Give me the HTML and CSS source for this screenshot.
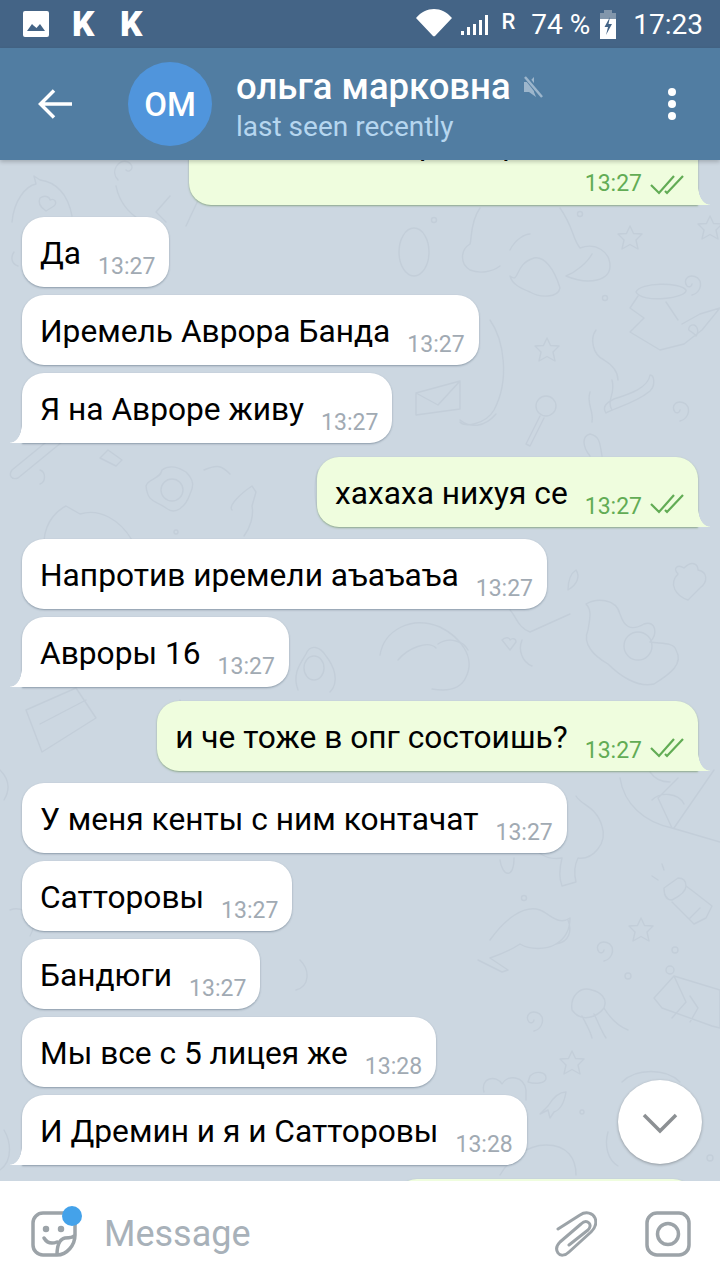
FILE: index.html
```html
<!DOCTYPE html>
<html lang="ru">
<head>
  <meta charset="UTF-8" />
  <meta name="viewport" content="width=device-width, initial-scale=1.0"/>
  <title>Telegram chat</title>
  <link rel="stylesheet" href="styles.css">
</head>
<body>

  <div class="status-bar">
    <div class="status-left">
      <svg class="ic-picture" width="26" height="26" viewBox="0 0 26 26">
        <path fill="#fff" fill-rule="evenodd" d="M2 0h22a2 2 0 0 1 2 2v22a2 2 0 0 1-2 2H2a2 2 0 0 1-2-2V2a2 2 0 0 1 2-2zM4 20h18l-5-7-3.500 4-3-2.500L9 13z"/>
      </svg>
      <span class="status-k">K</span>
      <span class="status-k">K</span>
    </div>
    <div class="status-right">
      <svg class="ic-wifi" width="36" height="28" viewBox="0 0 36 28">
        <path fill="#fff" d="M0 9C10-3 26-3 36 9L19.500 26.500a2 2 0 0 1-3 0z"/>
      </svg>
      <svg class="ic-signal" width="28" height="20" viewBox="0 0 28 20" fill="#fff">
        <rect x="0" y="16" width="3" height="4"/>
        <rect x="6" y="12" width="3" height="8"/>
        <rect x="12" y="9" width="3" height="11"/>
        <rect x="18" y="5" width="3" height="15"/>
        <rect x="24" y="0" width="3" height="20"/>
      </svg>
      <span class="status-r">R</span>
      <span class="status-text">74 %</span>
      <svg class="ic-battery" width="16" height="29" viewBox="0 0 16 29">
        <path fill="#8296ab" d="M4 0h8v3h4v9H0V3h4z"/>
        <path fill="#fff" d="M0 12h16v17H0z"/>
        <path fill="#fff" d="M0 9h16v4H0z"/>
        <path fill="#446486" d="M10 7 4.500 17H8l-2 8 6-11H8.500z"/>
      </svg>
      <span class="status-text status-time">17:23</span>
    </div>
  </div>

  <header class="chat-header">
    <svg class="ic-back" width="34" height="30" viewBox="0 0 34 30">
      <path fill="none" stroke="#fff" stroke-width="3.500" d="M34 15H3M16 1.500 2.500 15 16 28.500"/>
    </svg>
    <div class="avatar">OM</div>
    <div class="chat-title">
      <div class="chat-name">
        <span>ольга марковна</span>
        <svg width="20" height="22" viewBox="0 0 20 22">
          <path fill="#9db6cc" d="M1 6h5l5-5v15l2 5-7-5H1z"/>
          <path stroke="#517da2" stroke-width="5" d="M3 1l15 19"/>
          <path stroke="#9db6cc" stroke-width="2.500" d="M2 1l17 20"/>
        </svg>
      </div>
      <div class="chat-status">last seen recently</div>
    </div>
    <div class="menu-dots"><i></i><i></i><i></i></div>
  </header>

  <main class="chat">
    <svg class="wallpaper" width="720" height="1021" viewBox="0 160 720 1021" fill="none" stroke="#c3ced9" stroke-width="1.400" stroke-linecap="round" stroke-linejoin="round">
      <defs>
        <path id="star" d="M0-12 3.500-4.500 12-4 6 2 8 11 0 6.500-8 11-6 2-12-4-3.500-4.500z"/>
        <path id="spiral" d="M2 0a3 3 0 0 1-5 2 6 6 0 0 1 1-9 9 9 0 0 1 12 4 11 11 0 0 1-8 14"/>
      </defs>
      <!-- top left -->
      <path d="M12 222c2-22 14-36 24-38l-2-8 6 4c16 2 28 14 32 36M40 198c6-4 10 0 10 2 4-2 8 2 4 6l-8 5c-6-4-8-9-6-13z"/>
      <path d="M118 180c-8-8 0-22 10-18 8 4 2 12-2 8M116 186c4 20 18 32 32 38M170 196l-14 16 10 10"/>
      <path d="M186 226l14-30M14 252c-4 6-2 12 4 14"/>
      <!-- upper right figure -->
      <ellipse cx="414" cy="252" rx="15" ry="24"/>
      <path d="M480 208c-10 14-8 30-10 36-10 6-10 20 0 26 10 4 22 2 30-4M560 208c14 20 12 30 20 40 16-6 30 4 30 18 0 14-20 20-44 10 10-4 22-14 26-22M510 250c6-12 16-16 20-16M510 276c10 8 4-12 24-18 10-2 20 10 26 30-2 10-20 10-30 4-10-4-18-8-20-16z"/>
      <use href="#star" x="630" y="238"/>
      <use href="#star" x="710" y="228"/>
      <path d="M636 292c4-10 44-10 50-2 2 8-44 14-50 2zM638 296l-8 12 14 10-14 14 30 18 24-6 18-14 18-22-20 6-18 10M666 302l12 18M690 326c6-4 10 4 6 10-4-6-10-4-6-10z"/>
      <use href="#spiral" x="690" y="284"/>
      <path d="M596 330c-6 8-4 24 8 30 10 6 14 12 14 20M650 375c-2 14-24 20-36 24-8 4-12 8-8 14 6-4 30-10 44-22 6-6 4-16 0-16z"/>
      <use href="#star" x="547" y="350"/>
      <circle cx="605" cy="298" r="2.500"/><circle cx="434" cy="220" r="2.500"/><circle cx="580" cy="214" r="2.500"/>
      <!-- envelope, lollipop -->
      <path d="M416 393l44-12v28l-44 6zM416 393l22 12 22-24M490 320c14 20 20 60 4 90-8 14-30 18-34 12M460 420c10 8 24 8 36-6"/>
      <circle cx="546" cy="406" r="10"/>
      <path d="M540 416l-14 28 4 2 14-28"/>
      <use href="#spiral" x="678" y="410"/>
      <path d="M590 392c-4 12 4 18 2 30M612 380c4 14-6 20 0 30"/>
      <path d="M590 456c-8-10-8-20 0-22 10 2 10 10 12 22"/>
      <!-- left middle -->
      <path d="M12 470l44-36 6 8-44 36c-6 2-10-2-6-8zM108 450l14 10-6 6-16-8z"/>
      <path d="M146 486c2-8 14-6 16-16 8-6 18-2 24 2 8 8 8 14 4 22-4 12-14 22-24 14-10-8-18-4-20-22z"/>
      <circle cx="172" cy="490" r="11"/>
      <path d="M232 510c-4-4 8-16 20-24l4 6-4 14c2 10-2 22-8 30M204 470c14-6 18-4 26 4M318 470c-4 10-4 30 0 40"/>
      <path d="M44 540c2-20 14-30 22-34l14 8c20-6 40 6 52 26"/>
      <circle cx="176" cy="532" r="2"/>
      <!-- avocado, bear, monkey, strawberry -->
      <path d="M298 690c-6-16 2-26 8-36 4-10 14-8 20 2 8 10 14 26 4 36"/>
      <ellipse cx="314" cy="668" rx="10" ry="12"/>
      <path d="M380 655c4-24 30-40 60-28 20 10 36 30 26 50-6 14-22 14-34 12"/>
      <path d="M438 644c12-8 26-2 30 6M398 660c10-12 30-20 38-12"/>
      <path d="M522 640c-4 10 0 22 10 26M510 610c6 6 8 18 20 22l40-18"/>
      <path d="M502 640c4-4 8-2 8 0 2-2 6-2 6 2l-6 8z"/>
      <path d="M586 604c10-6 30-6 34 10 4 12 10 18 24 10 12-4 14 10 6 18 10 2 24 0 26 8 8 14-6 24-22 34-16 4-34-8-46-20-14-8-26-20-20-34 2-12 4-20-2-26z"/>
      <circle cx="638" cy="646" r="14"/>
      <path d="M678 574c-6-6 0-10 6-6 8-8 14-4 14 2 10 2 10 12 2 18l-12 12c-12-4-20-16-10-26z"/>
      <path d="M576 570c4 6 2 14-8 20 0-8 2-16 8-20z"/>
      <!-- cake left -->
      <path d="M26 710l50-22 20 30-54 34zM26 710l16 42M40 724l46-24"/>
      <path d="M0 770c10 10 10 20 4 30"/>
      <path d="M180 700c2 6 4 20-2 36"/>
      <!-- balloon -->
      <path d="M620 778c4 26 24 44 52 50l48 14M672 828l-14-30 20-20M714 770l-40 58M652 800c8-8 26-8 32 4M650 772c4 6 10 10 20 10"/>
      <!-- ice cream -->
      <path d="M576 796c6 10 20 10 26 30 6 18-10 34-24 32-4 8-4 16-2 24l-14 4c-4-10-2-20 0-28-14 2-30-4-24-18"/>
      <path d="M500 860c2 16 14 20 14-2"/>
      <!-- flashlight -->
      <path d="M664 888l14-10c4 0 8 2 8 8 0 6-6 10-14 14-6 0-8-6-8-12zM686 886l8 6 18 14-6 12-12 6-22-22M700 908l-10 10M664 870l-2-6M658 880l-6-4"/>
      <!-- whale -->
      <path d="M490 940c14-20 34-36 50-30 10 4 18 16 30 8 0 10-4 20-14 26-10 6-26 6-36 0-6 4-18 10-30 14l18 12-6 2-24-12M568 920c4 10 2 22-12 24"/>
      <use href="#star" x="641" y="930"/>
      <use href="#spiral" x="602" y="950"/>
      <circle cx="675" cy="950" r="3"/><circle cx="628" cy="976" r="3"/>
      <circle cx="524" cy="898" r="2.500"/>
      <!-- jellyfish -->
      <path d="M572 1010c-2-14 8-24 20-20 8 2 16 8 12 18-6 8-22 16-32 2zM582 1016c4 8 8 14 10 22M594 1014c4 8 8 18 12 24M604 1008c6 10 14 18 24 22"/>
      <use href="#spiral" x="532" y="1020"/>
      <!-- packet -->
      <path d="M654 998l20-22 46 14v38l-8-2-50-18zM674 976l12 26-14 16M690 996l8 12-8 14"/>
      <circle cx="670" cy="970" r="4"/>
      <use href="#star" x="572" y="1063"/>
      <path d="M484 1092c-4-14 12-18 18-8 6-10 22-8 24 6v10M530 1076c6-6 16-4 16 2 0 6-12 6-18 4z"/>
      <path d="M548 1106c6-10 12-14 18-14-2 12-6 18-12 20l-4 6-2-8-8 4z"/>
      <path d="M622 1082c14-14 44-14 58 0M630 1094c10-10 28-10 38 0"/>
      <path d="M500 1175c8-14 26-30 46-30 22 0 30 14 30 30"/>
      <path d="M608 1132c-4 14 0 28 10 34"/>
      <circle cx="710" cy="1158" r="3"/><circle cx="582" cy="1112" r="2"/>
      <path d="M10 910c14-6 30 10 20 26M0 1170c14-10 10-30 4-40"/>
      <path d="M300 960c10 10 10 26-4 30M180 1020c-8 8-20 30 0 40"/>
      <path d="M40 470c6 2 6 12 0 14"/>
    </svg>

    <div class="msg out cut">
      <div class="msg-text">Там машина время рядом</div>
      <div class="msg-meta">
        <span class="msg-time">13:27</span>
        <svg class="checks" width="34" height="20" viewBox="0 0 34 20"><path d="M1 10l8 8L24 1M15 16l2 2L33 1"/></svg>
      </div>
    </div>

    <div class="msg in"><span class="msg-text">Да</span><span class="msg-time">13:27</span></div>
    <div class="msg in"><span class="msg-text">Иремель Аврора Банда</span><span class="msg-time">13:27</span></div>
    <div class="msg in tail"><span class="msg-text">Я на Авроре живу</span><span class="msg-time">13:27</span></div>

    <div class="msg out tail">
      <span class="msg-text">хахаха нихуя се</span><span class="msg-time">13:27</span>
      <svg class="checks" width="34" height="20" viewBox="0 0 34 20"><path d="M1 10l8 8L24 1M15 16l2 2L33 1"/></svg>
    </div>

    <div class="msg in"><span class="msg-text">Напротив иремели аъаъаъа</span><span class="msg-time">13:27</span></div>
    <div class="msg in tail"><span class="msg-text">Авроры 16</span><span class="msg-time">13:27</span></div>

    <div class="msg out tail">
      <span class="msg-text">и че тоже в опг состоишь?</span><span class="msg-time">13:27</span>
      <svg class="checks" width="34" height="20" viewBox="0 0 34 20"><path d="M1 10l8 8L24 1M15 16l2 2L33 1"/></svg>
    </div>

    <div class="msg in"><span class="msg-text">У меня кенты с ним контачат</span><span class="msg-time">13:27</span></div>
    <div class="msg in"><span class="msg-text">Сатторовы</span><span class="msg-time">13:27</span></div>
    <div class="msg in"><span class="msg-text">Бандюги</span><span class="msg-time">13:27</span></div>
    <div class="msg in"><span class="msg-text">Мы все с 5 лицея же</span><span class="msg-time">13:28</span></div>
    <div class="msg in tail"><span class="msg-text">И Дремин и я и Сатторовы</span><span class="msg-time">13:28</span></div>

    <div class="msg out peek"></div>

    <button class="scroll-down">
      <svg width="36" height="22" viewBox="0 0 36 22"><path fill="none" stroke="#8c9093" stroke-width="3.500" d="M2 2l16 16L34 2"/></svg>
    </button>
  </main>

  <footer class="input-bar">
    <div class="sticker-btn">
      <svg width="46" height="46" viewBox="0 0 46 46" fill="none" stroke="#9ca3a8" stroke-width="3.500" stroke-linecap="round" stroke-linejoin="round">
        <path d="M44 24V12A10 10 0 0 0 34 2H12A10 10 0 0 0 2 12v22a10 10 0 0 0 10 10h14C36 44 44 34 44 24zM44 24c-2 3-6 3-10 3-5 1-8 5-8 17"/>
        <path d="M13 27c3 5 8 6 13 4"/>
        <circle cx="15" cy="18" r="1.500" fill="#9ca3a8"/>
        <circle cx="30" cy="18" r="1.500" fill="#9ca3a8"/>
      </svg>
      <i class="badge"></i>
    </div>
    <span class="placeholder">Message</span>
    <svg class="ic-clip" width="42" height="46" viewBox="0 0 42 46" fill="none" stroke="#9ca3a8" stroke-width="3" stroke-linecap="round" stroke-linejoin="round">
      <path d="M3 18 25 4c6-4 13-2 15 3s0 10-4 14L14 41c-4 4-9 4-11 1s-2-7 2-11L26 13c3-3 6-3 8-1s1 5-1 7L14 34"/>
    </svg>
    <svg class="ic-camera" width="46" height="46" viewBox="0 0 46 46" fill="none" stroke="#9ca3a8" stroke-width="3.500">
      <rect x="2" y="2" width="42" height="42" rx="10"/>
      <circle cx="23" cy="23" r="10.500"/>
    </svg>
  </footer>

</body>
</html>
```

FILE: styles.css
```css
* {
  box-sizing: border-box;
}

html, body {
  margin: 0;
  padding: 0;
  height: 1280px;
  overflow: hidden;
}

body {
  font-family: Roboto, "Noto Sans", sans-serif;
  display: flex;
  flex-direction: column;
  background: #fff;
}

/* status bar */
.status-bar {
  height: 48px;
  flex-shrink: 0;
  background: #446486;
  color: #fff;
  display: flex;
  align-items: center;
  justify-content: space-between;
  padding: 0 17px 0 23px;
}

.status-left, .status-right {
  display: flex;
  align-items: center;
}

.status-k {
  font-size: 35px;
  font-weight: 900;
  line-height: 1;
  margin-left: 23px;
  width: 25px;
}

.ic-wifi {
  margin-top: -2px;
}

.ic-signal {
  margin-left: 9px;
  margin-top: 1px;
}

.status-r {
  font-size: 22px;
  font-weight: 500;
  margin: -5px 0 0 12px;
}

.status-text {
  font-size: 28px;
  margin-left: 16px;
  white-space: nowrap;
}

.ic-battery {
  margin-left: 10px;
}

.status-time {
  margin-left: 17px;
}

/* header */
.chat-header {
  height: 112px;
  flex-shrink: 0;
  background: #517da2;
  display: flex;
  align-items: center;
  padding: 0 44px 0 38px;
  box-shadow: 0 2px 4px rgba(0, 0, 0, 0.2);
  position: relative;
  z-index: 2;
}

.avatar {
  width: 84px;
  height: 84px;
  border-radius: 50%;
  background: #5095dc;
  color: #fff;
  font-size: 33px;
  font-weight: 500;
  display: flex;
  align-items: center;
  justify-content: center;
  margin-left: 56px;
  flex-shrink: 0;
}

.chat-title {
  flex: 1;
  margin-left: 24px;
  padding-top: 4px;
}

.chat-name {
  color: #fff;
  font-size: 36.500px;
  font-weight: 500;
  line-height: 42px;
  display: flex;
  align-items: center;
  gap: 12px;
}

.chat-status {
  color: #b6d6ef;
  font-size: 28px;
  line-height: 38px;
}

.menu-dots {
  display: flex;
  flex-direction: column;
  gap: 4px;
}

.menu-dots i {
  display: block;
  width: 8px;
  height: 8px;
  border-radius: 50%;
  background: #fff;
}

/* messages */
.chat {
  flex: 1;
  min-height: 0;
  background: #ccd7e1;
  overflow: hidden;
  position: relative;
  display: flex;
  flex-direction: column;
  gap: 8px;
}

.wallpaper {
  position: absolute;
  left: 0;
  top: 0;
}

.msg {
  position: relative;
  flex-shrink: 0;
  height: 70px;
  display: flex;
  align-items: flex-start;
  padding: 0 14px 0 18px;
  border-radius: 22px;
  box-shadow: 0 1px 2px rgba(60, 80, 100, 0.45);
  white-space: nowrap;
}

.in {
  align-self: flex-start;
  margin-left: 22px;
  background: #fff;
}

.out {
  align-self: flex-end;
  margin-right: 22px;
  margin-top: 6px;
  background: #effdde;
  box-shadow: 0 1px 2px rgba(90, 130, 70, 0.55);
}

.out + .in {
  margin-top: 4px;
}

.msg-text {
  font-size: 31.700px;
  line-height: 36px;
  color: #000;
  margin-top: 19px;
}

.msg-time {
  font-size: 23px;
  line-height: 28px;
  color: #a1aab3;
  margin: 36px 0 0 17px;
}

.out .msg-time {
  color: #62ac55;
}

.checks {
  margin: 37px 0 0 8px;
  fill: none;
  stroke: #62ac55;
  stroke-width: 2.200;
}

.tail.in {
  border-bottom-left-radius: 0;
}

.tail.out {
  border-bottom-right-radius: 0;
}

.tail::after {
  content: "";
  position: absolute;
  bottom: 0;
  width: 12px;
  height: 18px;
}

.tail.in::after {
  left: -12px;
  background: radial-gradient(ellipse 12px 18px at 0 0, transparent 96%, #fff 100%);
}

.tail.out::after {
  right: -12px;
  background: radial-gradient(ellipse 12px 18px at 100% 0, transparent 96%, #effdde 100%);
}

/* the bubble cut off under the header */
.cut {
  display: block;
  height: 115px;
  margin-top: -70px;
  width: 509px;
  border-bottom-right-radius: 0;
}

.cut .msg-text {
  margin-top: 37px;
}

.cut + .in {
  margin-top: 4px;
}

.cut::after {
  content: "";
  position: absolute;
  right: -12px;
  bottom: 0;
  width: 12px;
  height: 18px;
  background: radial-gradient(ellipse 12px 18px at 100% 0, transparent 96%, #effdde 100%);
}

.msg-meta {
  position: absolute;
  right: 14px;
  bottom: 7px;
  display: flex;
  align-items: flex-start;
}

.msg-meta .msg-time {
  margin: 0;
}

.msg-meta .checks {
  margin: 5px 0 0 8px;
}

.peek {
  width: 300px;
  margin-right: 25px;
}

.scroll-down {
  position: absolute;
  right: 18px;
  top: 920px;
  width: 84px;
  height: 84px;
  border: none;
  padding: 0;
  border-radius: 50%;
  background: #fff;
  box-shadow: 0 1px 3px rgba(0, 0, 0, 0.3);
  display: flex;
  align-items: center;
  justify-content: center;
}

.scroll-down svg {
  margin-top: 3px;
}

/* input */
.input-bar {
  height: 99px;
  flex-shrink: 0;
  background: #fff;
  display: flex;
  align-items: center;
  padding: 6px 29px 0 31px;
  position: relative;
  z-index: 1;
}

.sticker-btn {
  position: relative;
  width: 46px;
  height: 46px;
}

.sticker-btn svg {
  display: block;
}

.badge {
  position: absolute;
  right: -5px;
  top: -5px;
  width: 20px;
  height: 20px;
  border-radius: 50%;
  background: #44a2ea;
}

.placeholder {
  flex: 1;
  margin-left: 27px;
  color: #a8b1b9;
  font-size: 36px;
}

.ic-camera {
  margin-left: 48px;
}
```
